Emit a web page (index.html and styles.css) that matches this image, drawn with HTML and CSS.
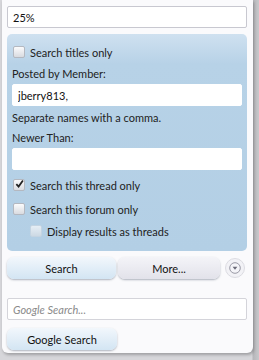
FILE: index.html
```html
<!DOCTYPE html>
<html lang="en">
  <head>
    <meta charset="UTF-8" />
    <title>Search</title>
    <link rel="stylesheet" href="styles.css">
  </head>
  <body>
    <div class="popup">
      <input class="text-box" type="text" value="25%" />

      <div class="options">
        <label class="check first"><span class="box"></span>Search titles only</label>
        <div class="field-label">Posted by Member:</div>
        <input class="text-box" type="text" value="jberry813," />
        <div class="hint">Separate names with a comma.</div>
        <div class="field-label">Newer Than:</div>
        <input class="text-box" type="text" value="" />
        <label class="check thread">
          <span class="box">
            <svg width="10" height="10" viewBox="0 0 10 10">
              <path d="M1.5 5.2 L4 7.8 L8.8 1.2" fill="none" stroke="#222" stroke-width="2" />
            </svg>
          </span>Search this thread only
        </label>
        <label class="check forum"><span class="box"></span>Search this forum only</label>
        <label class="check sub"><span class="box faded"></span>Display results as threads</label>
      </div>

      <div class="button-row">
        <button class="btn btn-primary">Search</button>
        <button class="btn btn-more">More...</button>
        <button class="btn-round">
          <svg width="12" height="12" viewBox="0 0 12 12">
            <circle cx="6" cy="6" r="5.3" fill="#f4f4f8" stroke="#9a9aa6" />
            <path d="M3.6 4.8 L8.4 4.8 L6 7.8 Z" fill="#6a6a78" />
          </svg>
        </button>
      </div>

      <input class="text-box google" type="text" placeholder="Google Search..." />
      <button class="btn btn-primary google-btn">Google Search</button>
    </div>
  </body>
</html>
```

FILE: styles.css
```css
body {
  margin: 0;
  padding: 0;
  background: linear-gradient(to right, #d6d6da 0, #d6d6da 252px, #b6b6ba 253px, #c8c8cb 259px);
  font-family: Lato, "Open Sans", Arial, sans-serif;
  font-size: 11px;
  color: #222;
  height: 360px;
  overflow: hidden;
}

.popup {
  width: 240px;
  margin-left: 2px;
  padding: 6px 6px 3px 5px;
  background: #fafafc;
  border-radius: 0 0 6px 6px;
  box-shadow: 1px 2px 3px rgba(0, 0, 0, 0.25);
  display: flex;
  flex-direction: column;
}

.text-box {
  box-sizing: border-box;
  width: 100%;
  height: 22px;
  margin: 0;
  padding: 1px 5px 0;
  border: 1px solid #c8c8d0;
  border-radius: 2px;
  background: #fff;
  font-family: Lato, "Open Sans", Arial, sans-serif;
  font-size: 11px;
  color: #111;
}

.options {
  margin-top: 6px;
  padding: 8px 5px 10px 5px;
  border-radius: 5px;
  background: linear-gradient(to bottom, #cfe1f0 0, #b7d2e7 30px, #b3cfe5 100%);
  display: flex;
  flex-direction: column;
}

.check {
  display: flex;
  align-items: center;
  height: 20px;
  padding-left: 1px;
}

.check.first {
  margin-bottom: 4px;
}

.check.thread {
  margin-top: 5px;
  margin-bottom: 4px;
}

.check.forum {
  margin-bottom: 2px;
}

.check.sub {
  padding-left: 18px;
}

.box {
  box-sizing: border-box;
  width: 12px;
  height: 12px;
  margin-right: 5px;
  border: 1px solid #b4b8c0;
  border-radius: 2px;
  background: linear-gradient(to bottom, #fbfbfc, #d9dbe0);
  display: flex;
  align-items: center;
  justify-content: center;
  overflow: visible;
}

.box svg {
  margin-top: -3px;
  margin-left: 1px;
}

.box.faded {
  border-color: #c4d4e2;
  background: linear-gradient(to bottom, #e6eef5, #cdd9e4);
}

.field-label {
  height: 16px;
  line-height: 16px;
  margin-bottom: 2px;
}

.hint {
  height: 16px;
  line-height: 16px;
  margin-top: 4px;
  margin-bottom: 4px;
}

.options .text-box {
  border-color: #fff;
}

.button-row {
  display: flex;
  align-items: center;
  margin-top: 6px;
}

.btn {
  height: 22px;
  padding: 0;
  border: none;
  border-radius: 7px;
  font-family: Lato, "Open Sans", Arial, sans-serif;
  font-size: 11px;
  color: #111;
  cursor: pointer;
  box-shadow: 0 1px 2px rgba(80, 90, 110, 0.45);
}

.btn-primary {
  width: 109px;
  background: linear-gradient(to bottom, #f2f7fc, #d3e5f3);
}

.btn-more {
  width: 102px;
  margin-left: 2px;
  background: linear-gradient(to bottom, #f4f4f8, #e2e2ea);
}

.btn-round {
  width: 20px;
  height: 20px;
  margin-left: 5px;
  padding: 0;
  border: 1px solid #dcdce2;
  border-radius: 50%;
  background: #f2f2f6;
  display: flex;
  align-items: center;
  justify-content: center;
}

.google {
  margin-top: 19px;
  font-style: italic;
  border-color: #d4d4da;
}

.google::placeholder {
  color: #8a8a8a;
}

.google-btn {
  margin-top: 8px;
  width: 110px;
}
```
